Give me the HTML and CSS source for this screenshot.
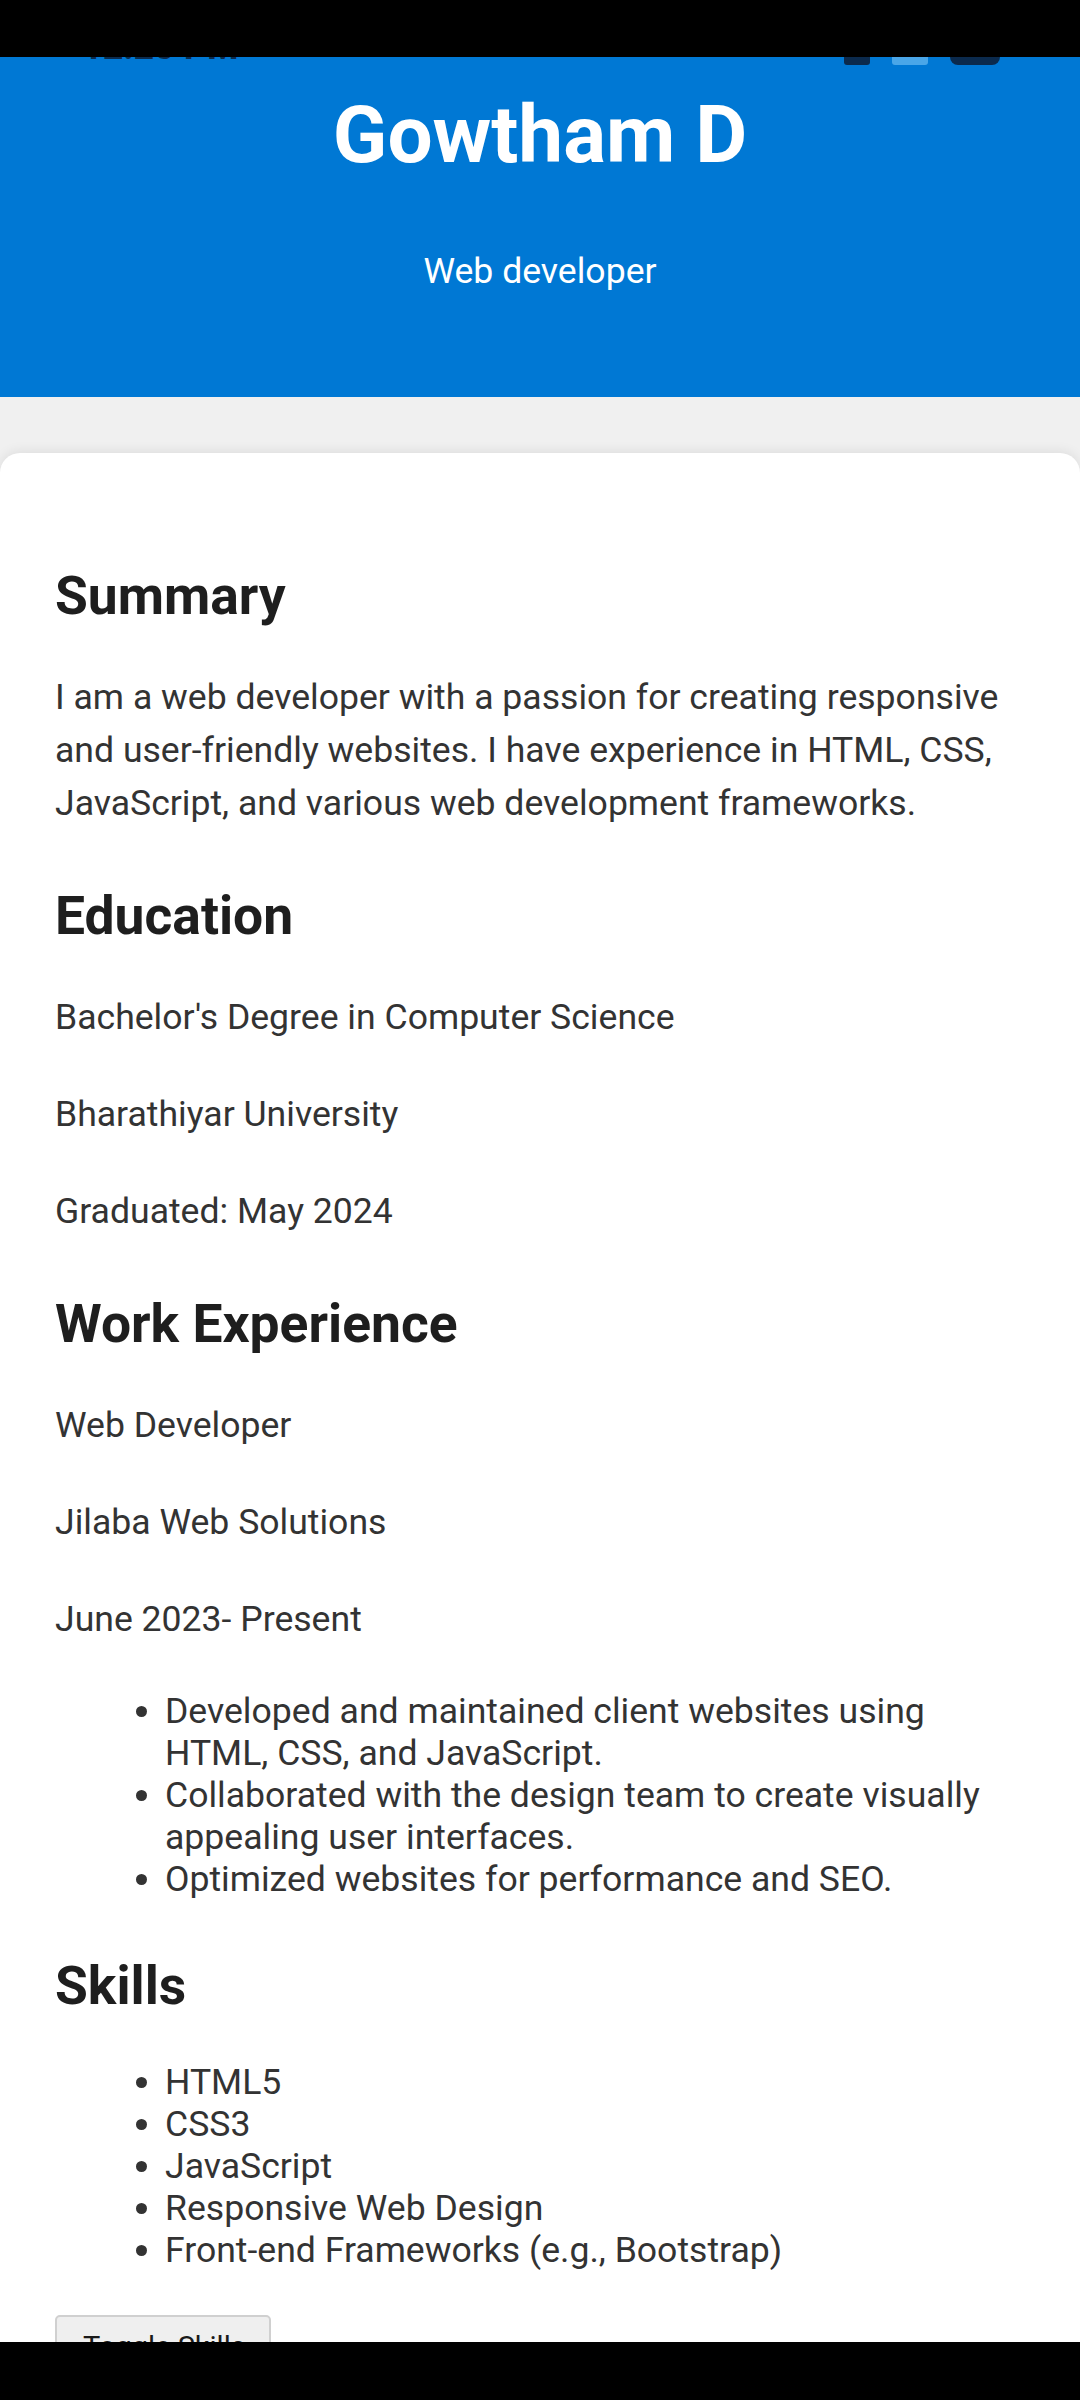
FILE: index.html
```html
<!DOCTYPE html>
<html lang="en">
<head>
<meta charset="utf-8">
<title>Gowtham D - Resume</title>
<link rel="stylesheet" href="styles.css">
</head>
<body>
<div class="topbar"></div>
<header class="hero">
  <div class="status">
    <span class="status-time">12:20 PM</span>
    <span class="status-icons"><span class="ic ic-a"></span><span class="ic ic-b"></span><span class="ic ic-bat"></span></span>
  </div>
  <h1 class="hero-name">Gowtham D</h1>
  <p class="hero-role">Web developer</p>
</header>
<main class="card">
  <section>
    <h2 class="sec-title">Summary</h2>
    <p class="text">I am a web developer with a passion for creating responsive and user-friendly websites. I have experience in HTML, CSS, JavaScript, and various web development frameworks.</p>
  </section>
  <section>
    <h2 class="sec-title">Education</h2>
    <p class="text">Bachelor's Degree in Computer Science</p>
    <p class="text">Bharathiyar University</p>
    <p class="text">Graduated: May 2024</p>
  </section>
  <section>
    <h2 class="sec-title">Work Experience</h2>
    <p class="text">Web Developer</p>
    <p class="text">Jilaba Web Solutions</p>
    <p class="text">June 2023- Present</p>
    <ul class="list">
      <li>Developed and maintained client websites using HTML, CSS, and JavaScript.</li>
      <li>Collaborated with the design team to create visually appealing user interfaces.</li>
      <li>Optimized websites for performance and SEO.</li>
    </ul>
  </section>
  <section>
    <h2 class="sec-title">Skills</h2>
    <ul class="list">
      <li>HTML5</li>
      <li>CSS3</li>
      <li>JavaScript</li>
      <li>Responsive Web Design</li>
      <li>Front-end Frameworks (e.g., Bootstrap)</li>
    </ul>
    <button class="toggle" type="button">Toggle Skills</button>
  </section>
</main>
<div class="navbar"></div>
</body>
</html>
```

FILE: styles.css
```css
html, body {
  margin: 0;
  padding: 0;
}
body {
  background: #f0f0f0;
  font-family: Roboto, "Noto Sans", "Liberation Sans", sans-serif;
  color: #333;
  font-size: 35.6px;
  min-height: 2400px;
}
.topbar {
  position: relative;
  z-index: 3;
  height: 57px;
  background: #000;
}
.hero {
  position: relative;
  background: #0078d4;
  height: 340px;
  box-sizing: border-box;
  padding-top: 31px;
  text-align: center;
  color: #fff;
  display: flex;
  flex-direction: column;
  align-items: center;
}
.status {
  position: absolute;
  left: 0;
  right: 0;
  top: -40px;
  height: 50px;
  display: flex;
  justify-content: space-between;
  align-items: flex-end;
  padding: 0 80px 0 82px;
  z-index: 1;
}
.status-time {
  font-size: 36px;
  font-weight: 700;
  line-height: 40px;
  color: #0b2a4d;
}
.status-icons {
  display: flex;
  gap: 22px;
  align-items: flex-end;
  margin-bottom: 2px;
}
.ic {
  display: block;
  background: #0b2a4d;
}
.ic-a { width: 26px; height: 26px; border-radius: 3px; }
.ic-b { width: 36px; height: 16px; background: #4aa6e8; border-radius: 3px; }
.ic-bat { width: 50px; height: 22px; border-radius: 8px; }
.hero-name {
  margin: 0;
  font-size: 80px;
  line-height: 94px;
  font-weight: 700;
}
.hero-role {
  margin: 68px 0 0;
  font-size: 35.6px;
  line-height: 42px;
}
.card {
  display: block;
  margin-top: 56px;
  background: #fff;
  border-radius: 20px 20px 0 0;
  box-shadow: 0 -2px 12px rgba(0, 0, 0, 0.08);
  padding: 58px 55px 100px;
}
.sec-title {
  margin: 54px 0 44px;
  font-size: 53.4px;
  line-height: 63px;
  font-weight: 700;
  color: #1e1e1e;
}
.card section:first-child .sec-title {
  margin-top: 53px;
}
.text {
  margin: 44px 0;
  line-height: 53px;
}
.list {
  margin: 44px 0;
  padding-left: 110px;
  line-height: 42px;
}
.toggle {
  display: inline-block;
  margin: 0;
  font-family: Roboto, "Liberation Sans", sans-serif;
  font-size: 29px;
  line-height: 34px;
  padding: 13px 23px 13px 26px;
  color: #1a1a1a;
  background: #efefef;
  border: 2px solid #d0d0d0;
  border-radius: 5px;
}
.navbar {
  position: fixed;
  left: 0;
  right: 0;
  bottom: 0;
  height: 58px;
  background: #000;
  z-index: 5;
}
```
